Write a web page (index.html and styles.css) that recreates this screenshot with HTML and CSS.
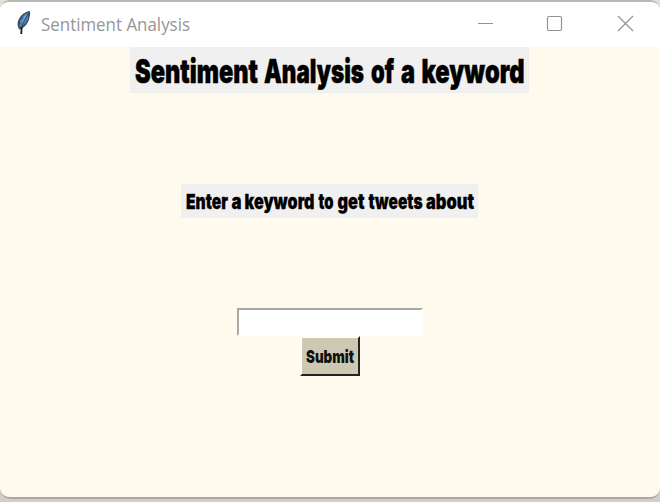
FILE: index.html
```
<!DOCTYPE html>
<html lang="en">
<head>
<meta charset="utf-8">
<title>Sentiment Analysis</title>
<link rel="stylesheet" href="styles.css">
</head>
<body>
<div class="window">
  <header class="titlebar">
    <svg class="feather" width="16" height="26" viewBox="0 0 16 26">
      <path d="M13.800 1C9 1.500 4 5.500 2.200 10.500c-1 3-1 6 1 9C8 18.500 11.500 14 13 9.500 14 6 14.500 3 13.800 1Z" fill="#4a4d52"/>
      <path d="M12.500 2.200C8.500 4 5 8 3.800 12l-.2 5.500C7.500 16 10.500 12 12 8.500Z" fill="#4687cb"/>
      <path d="M10 5 6.500 13" stroke="#7db0e4" stroke-width="1.400"/>
      <path d="M12.500 3 8 11 5.500 18M2.500 12l1.800 1.800M4.500 7.500l1.800 1.500" stroke="#2b3440" stroke-width=".8" fill="none"/>
      <path d="M5.600 17 5.300 24" stroke="#1b1b1b" stroke-width="1.800"/>
    </svg>
    <svg class="caption" width="152" height="28"><text x="0" y="20" textLength="149" lengthAdjust="spacingAndGlyphs">Sentiment Analysis</text></svg>
    <svg class="controls" width="160" height="20" viewBox="0 0 160 20">
      <path d="M2 9.500h15"/>
      <rect x="71.500" y="2.500" width="14" height="14" rx="1.500"/>
      <path d="M142 2l15 15M157 2l-15 15"/>
    </svg>
  </header>
  <main class="content">
    <svg class="label heading" width="399" height="46">
      <g transform="translate(0 35.500)">
        <text x="5" textLength="123" lengthAdjust="spacingAndGlyphs">Sentiment</text>
        <text x="134" textLength="100" lengthAdjust="spacingAndGlyphs">Analysis</text>
        <text x="241" textLength="23" lengthAdjust="spacingAndGlyphs">of</text>
        <text x="271" textLength="14" lengthAdjust="spacingAndGlyphs">a</text>
        <text x="291.500" textLength="103" lengthAdjust="spacingAndGlyphs">keyword</text>
      </g>
    </svg>
    <svg class="label prompt" width="297" height="34">
      <g transform="translate(0 25)">
        <text x="5" textLength="42" lengthAdjust="spacingAndGlyphs">Enter</text>
        <text x="50.500" textLength="10" lengthAdjust="spacingAndGlyphs">a</text>
        <text x="63.500" textLength="70" lengthAdjust="spacingAndGlyphs">keyword</text>
        <text x="137.500" textLength="15" lengthAdjust="spacingAndGlyphs">to</text>
        <text x="156.500" textLength="27" lengthAdjust="spacingAndGlyphs">get</text>
        <text x="187.500" textLength="54" lengthAdjust="spacingAndGlyphs">tweets</text>
        <text x="245" textLength="48" lengthAdjust="spacingAndGlyphs">about</text>
      </g>
    </svg>
    <input class="entry" type="text" aria-label="Keyword">
    <button class="submit" type="button"><svg width="50" height="26"><text x="1" y="20" textLength="48" lengthAdjust="spacingAndGlyphs">Submit</text></svg></button>
  </main>
</div>
</body>
</html>
```
FILE: styles.css
```
* { box-sizing: border-box; }
body { margin: 0; height: 502px; overflow: hidden; background: linear-gradient(#e4e1d6 0 20px, #d5cec5 480px); }
svg { display: block; flex: none; overflow: visible; }
.window { width: 660px; height: 499px; border: solid #b9b9b3; border-width: 2px 0; border-bottom-color: #a9a8a1; border-radius: 10px; overflow: hidden; background: #fffaee; }
.titlebar { height: 45px; display: flex; align-items: center; background: #fff; padding-left: 16px; }
.feather { margin-top: -3px; }
.caption { margin-left: 9px; }
.caption text { font: 19px "Open Sans", sans-serif; fill: #969696; }
.controls { margin-left: 283px; margin-top: -1px; fill: none; stroke: #929292; stroke-width: 1.2; }
.content { display: flex; flex-direction: column; align-items: center; width: 660px; height: 450px; }
.label { background: #f0f0f0; font-family: Inter, sans-serif; font-weight: 900; margin-right: 1px; }
.heading { font-size: 33px; stroke: #000; stroke-width: .5px; }
.prompt { margin-top: 91px; font-size: 20.5px; stroke: #000; stroke-width: .3px; }
.entry { width: 186px; height: 28px; margin: 90px 0 0; padding: 2px; border: solid #fff; border-width: 2px; border-top-color: #a9a8a8; border-left-color: #a9a8a8; border-radius: 0; background: #fff; outline: none; }
.submit { width: 60px; height: 40px; margin: 0; padding: 0 0 0 3px; display: flex; align-items: center; border: 2px solid; border-color: #fffdf4 #24231f #24231f #fffdf4; background: #cdc8b1; font: 900 18px Inter, sans-serif; fill: #111; }
```
